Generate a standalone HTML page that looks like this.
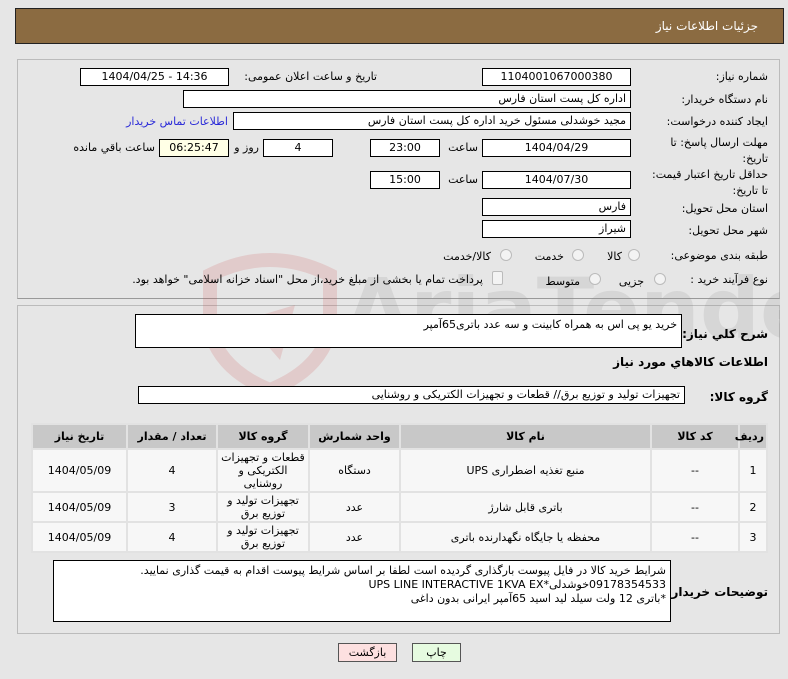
<!DOCTYPE html>
<html><head><meta charset="utf-8"><style>
*{box-sizing:border-box;margin:0;padding:0}
body{width:788px;height:679px;background:#e6e6e6;font-family:"DejaVu Sans","Liberation Sans",sans-serif;font-size:11px;color:#000;position:relative;overflow:hidden}
.a{position:absolute}
.in{position:absolute;background:#fff;border:1px solid #000;height:18px;line-height:16px;padding:0 4px;white-space:nowrap;overflow:hidden}
.c{text-align:center}
.r{text-align:right;direction:rtl}
.l{position:absolute;white-space:nowrap;direction:rtl;text-align:right}
.rad{position:absolute;width:12px;height:12px;border-radius:50%;border:1px solid #bbb;background:#f3f3f3}
table{border-collapse:separate;border-spacing:2px;position:absolute;left:31px;top:423px;width:737px;background:#e2e2e2;direction:rtl;table-layout:fixed}
td,th{text-align:center;font-size:11px;padding:0 2px}
th{background:#c8c8c8;height:23px;font-weight:bold}
td{background:#f7f7f7}
</style></head><body>
<div class="a" style="left:15px;top:8px;width:769px;height:36px;background:#8b6b41;border:1px solid #222"></div>
<div class="l" style="right:30px;top:19px;color:#fff;font-size:12px">جزئیات اطلاعات نیاز</div>

<div class="a" style="left:17px;top:59px;width:763px;height:240px;border:1px solid #bbb;border-bottom:1px solid #999"></div>
<div class="a" style="left:17px;top:305px;width:763px;height:329px;border:1px solid #bbb"></div>

<svg class="a" style="left:200px;top:250px" width="580" height="140" opacity="0.16">
<path d="M10 25 Q70 -5 130 25 L130 80 Q120 120 70 140 Q20 120 10 80 Z" fill="none" stroke="#c44" stroke-width="14"/>
<path d="M45 70 L95 55 L80 110 Z" fill="#c44"/>
<text x="145" y="88" font-size="84" font-family="DejaVu Sans" font-weight="bold" fill="#888">AriaTender.net</text>
</svg>

<div class="l" style="right:20px;top:70px">شماره نیاز:</div>
<div class="in c" style="left:482px;top:68px;width:149px">1104001067000380</div>
<div class="l" style="right:411px;top:70px">تاریخ و ساعت اعلان عمومی:</div>
<div class="in c" style="left:80px;top:68px;width:149px">1404/04/25 - 14:36</div>

<div class="l" style="right:20px;top:93px">نام دستگاه خریدار:</div>
<div class="in r" style="left:183px;top:90px;width:448px">اداره کل پست استان فارس</div>

<div class="l" style="right:20px;top:115px">ایجاد کننده درخواست:</div>
<div class="in r" style="left:233px;top:112px;width:398px">مجید خوشدلی مسئول خرید اداره کل پست استان فارس</div>
<div class="l" style="right:560px;top:115px;color:#2a2ad8">اطلاعات تماس خریدار</div>

<div class="l" style="right:20px;top:135px;line-height:16px">مهلت ارسال پاسخ: تا<br>تاریخ:</div>
<div class="in c" style="left:482px;top:139px;width:149px">1404/04/29</div>
<div class="l" style="right:310px;top:141px">ساعت</div>
<div class="in c" style="left:370px;top:139px;width:70px">23:00</div>
<div class="in c" style="left:263px;top:139px;width:70px">4</div>
<div class="l" style="right:529px;top:141px">روز و</div>
<div class="in c" style="left:159px;top:139px;width:70px;background:#ffffe6">06:25:47</div>
<div class="l" style="right:633px;top:141px">ساعت باقي مانده</div>

<div class="l" style="right:20px;top:167px;line-height:16px">حداقل تاریخ اعتبار قیمت:<br>تا تاریخ:</div>
<div class="in c" style="left:482px;top:171px;width:149px">1404/07/30</div>
<div class="l" style="right:310px;top:173px">ساعت</div>
<div class="in c" style="left:370px;top:171px;width:70px">15:00</div>

<div class="l" style="right:20px;top:202px">استان محل تحویل:</div>
<div class="in r" style="left:482px;top:198px;width:149px">فارس</div>
<div class="l" style="right:20px;top:224px">شهر محل تحویل:</div>
<div class="in r" style="left:482px;top:220px;width:149px">شیراز</div>

<div class="l" style="right:20px;top:249px">طبقه بندی موضوعی:</div>
<div class="rad" style="left:628px;top:249px"></div><div class="l" style="right:166px;top:250px">کالا</div>
<div class="rad" style="left:572px;top:249px"></div><div class="l" style="right:224px;top:250px">خدمت</div>
<div class="rad" style="left:500px;top:249px"></div><div class="l" style="right:297px;top:250px">کالا/خدمت</div>

<div class="l" style="right:20px;top:273px">نوع فرآیند خرید :</div>
<div class="rad" style="left:654px;top:273px"></div><div class="l" style="right:144px;top:275px">جزیی</div>
<div class="rad" style="left:589px;top:273px"></div><div class="l" style="right:208px;top:275px">متوسط</div>
<div class="a" style="left:492px;top:271px;width:11px;height:14px;border:1px solid #bbb;background:#f3f3f3;border-radius:2px"></div>
<div class="l" style="right:305px;top:273px">پرداخت تمام یا بخشی از مبلغ خرید،از محل "اسناد خزانه اسلامی" خواهد بود.</div>

<div class="l" style="right:20px;top:327px;font-weight:bold;font-size:12px">شرح کلي نیاز:</div>
<div class="in r" style="left:135px;top:314px;width:547px;height:34px;line-height:20px">خرید یو پی اس به همراه کابینت و سه عدد باتری65آمپر</div>
<div class="l" style="right:20px;top:355px;font-weight:bold;font-size:12px">اطلاعات کالاهاي مورد نیاز</div>
<div class="l" style="right:20px;top:390px;font-weight:bold;font-size:12px">گروه کالا:</div>
<div class="in r" style="left:138px;top:386px;width:547px">تجهیزات تولید و توزیع برق// قطعات و تجهیزات الکتریکی و روشنایی</div>

<table>
<colgroup><col style="width:26px"><col style="width:86px"><col style="width:249px"><col style="width:89px"><col style="width:90px"><col style="width:88px"><col style="width:93px"></colgroup>
<tr><th>ردیف</th><th>کد کالا</th><th>نام کالا</th><th>واحد شمارش</th><th>گروه کالا</th><th>تعداد / مقدار</th><th>تاریخ نیاز</th></tr>
<tr style="height:41px"><td>1</td><td>--</td><td>منبع تغذیه اضطراری UPS</td><td>دستگاه</td><td style="line-height:13px">قطعات و تجهیزات الکتریکی و روشنایی</td><td>4</td><td>1404/05/09</td></tr>
<tr style="height:28px"><td>2</td><td>--</td><td>باتری قابل شارژ</td><td>عدد</td><td style="line-height:13px">تجهیزات تولید و توزیع برق</td><td>3</td><td>1404/05/09</td></tr>
<tr style="height:28px"><td>3</td><td>--</td><td>محفظه یا جایگاه نگهدارنده باتری</td><td>عدد</td><td style="line-height:13px">تجهیزات تولید و توزیع برق</td><td>4</td><td>1404/05/09</td></tr>
</table>

<div class="l" style="right:20px;top:585px;font-weight:bold;font-size:12px">توضیحات خریدار:</div>
<div class="in r" style="left:53px;top:560px;width:618px;height:62px;line-height:14px;white-space:normal;padding-top:3px">شرایط خرید کالا در فایل پیوست بارگذاری گردیده است لطفا بر اساس شرایط پیوست اقدام به قیمت گذاری نمایید.<br>09178354533خوشدلی*UPS LINE INTERACTIVE 1KVA EX<br>*باتری 12 ولت سیلد لید اسید 65آمپر ایرانی بدون داغی</div>

<div class="a c" style="left:338px;top:643px;width:59px;height:19px;background:#fde0e0;border:1px solid #555;line-height:17px">بازگشت</div>
<div class="a c" style="left:412px;top:643px;width:49px;height:19px;background:#e6fbe0;border:1px solid #555;line-height:17px">چاپ</div>
</body></html>
